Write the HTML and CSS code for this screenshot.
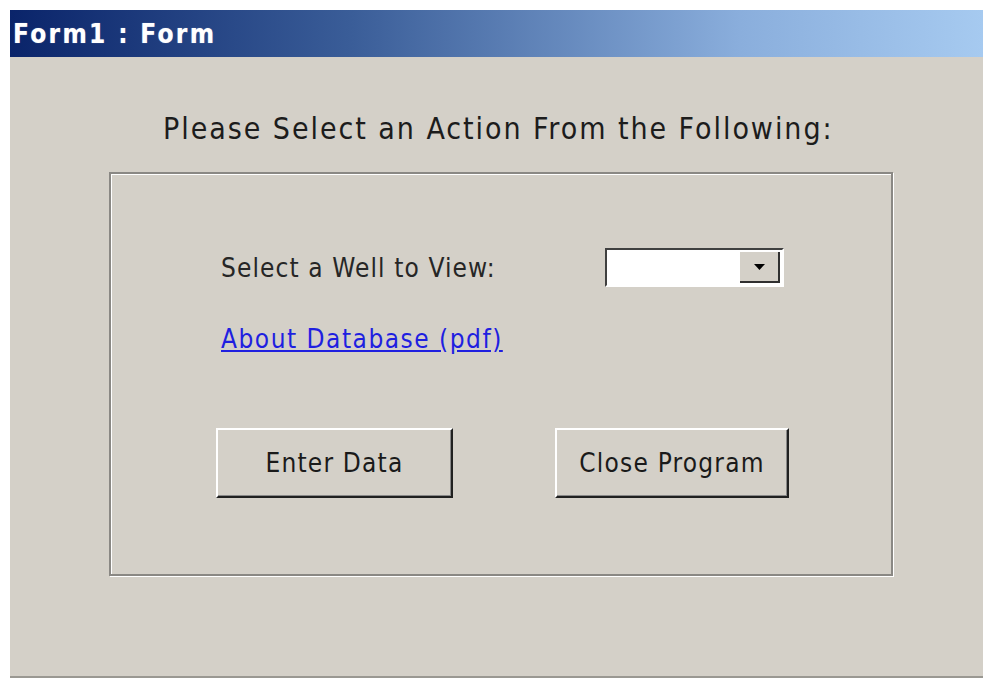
FILE: index.html
```html
<!DOCTYPE html>
<html>
<head>
<meta charset="utf-8">
<title>Form1 : Form</title>
<link rel="stylesheet" href="styles.css">
</head>
<body>
<div class="window">
  <div class="titlebar">Form1 : Form</div>
  <div class="client">
    <div class="heading">Please Select an Action From the Following:</div>
    <div class="frame">
      <div class="row well-row">
        <span class="label">Select a Well to View:</span>
        <div class="combo">
          <div class="combo-field"></div>
          <div class="combo-btn">
            <svg width="11" height="6" viewBox="0 0 11 6"><path d="M0 0h11L5.5 6z" fill="#000"/></svg>
          </div>
        </div>
      </div>
      <a class="link" href="#">About Database (pdf)</a>
      <div class="row buttons">
        <button class="btn btn-enter">Enter Data</button>
        <button class="btn btn-close">Close Program</button>
      </div>
    </div>
  </div>
</div>
</body>
</html>
```
FILE: styles.css
```css
html, body {
  margin: 0;
  padding: 0;
  background: #ffffff;
}

body {
  font-family: "DejaVu Sans Condensed", "DejaVu Sans", sans-serif;
  color: #000;
}

.window {
  margin: 10px 0 0 10px;
  width: 973px;
  height: 668px;
  background: #d4d0c8;
  border-bottom: 2px solid #9a9892;
  box-sizing: border-box;
  display: flex;
  flex-direction: column;
}

/* caption bar with the classic blue gradient */
.titlebar {
  height: 47px;
  background: linear-gradient(to right, #0a246a 0%, #3a5d98 35%, #8aaedc 75%, #a6caf0 100%);
  color: #fff;
  font-weight: bold;
  font-size: 26px;
  letter-spacing: 2.3px;
  line-height: 49px;
  padding-left: 3px;
  box-sizing: border-box;
  text-shadow: 0 0 1px rgba(255, 255, 255, 0.5);
}

.client {
  padding-left: 99px;
  display: flex;
  flex-direction: column;
}

.heading {
  font-size: 30px;
  letter-spacing: 1.95px;
  margin-top: 54px;
  margin-left: 54px;
  line-height: 36px;
  color: #1c1c1c;
}

/* etched group frame */
.frame {
  margin-top: 25px;
  width: 784px;
  height: 404px;
  box-sizing: border-box;
  border: 2px solid #8a8884;
  box-shadow: inset 1px 1px 0 #ffffff, 1px 1px 0 #ffffff;
  padding: 74px 0 0 110px;
  display: flex;
  flex-direction: column;
}

.row {
  display: flex;
  align-items: center;
}

.label {
  font-size: 26px;
  letter-spacing: 1.1px;
  width: 385px;
  color: #262626;
}

/* sunken combo box */
.combo {
  width: 179px;
  height: 39px;
  margin-left: -1px;
  box-sizing: border-box;
  border-top: 2px solid #404040;
  border-left: 2px solid #404040;
  border-right: 2px solid #ffffff;
  border-bottom: 2px solid #ffffff;
  background: #fff;
  display: flex;
  justify-content: flex-end;
  align-items: stretch;
  padding: 2px 2px 2px 0;
}

.combo-btn {
  width: 40px;
  background: #d4d0c8;
  border-right: 2px solid #303030;
  border-bottom: 2px solid #303030;
  box-sizing: border-box;
  display: flex;
  align-items: center;
  justify-content: center;
}

.link {
  margin-top: 37px;
  font-size: 26px;
  letter-spacing: 1.5px;
  color: #1f1fe0;
  text-decoration: underline;
  align-self: flex-start;
}

.buttons {
  margin-top: 74px;
  margin-left: -5px;
}

/* raised push buttons */
.btn {
  height: 70px;
  font-family: inherit;
  font-size: 26px;
  letter-spacing: 1.2px;
  color: #1a1a1a;
  background: #d4d0c8;
  border: 0;
  box-sizing: border-box;
  border-top: 2px solid #ffffff;
  border-left: 2px solid #ffffff;
  border-right: 2px solid #202020;
  border-bottom: 2px solid #202020;
  box-shadow: inset -1px -1px 0 #888;
  padding: 0;
}

.btn-enter {
  width: 237px;
}

.btn-close {
  width: 234px;
  margin-left: 102px;
}
```
